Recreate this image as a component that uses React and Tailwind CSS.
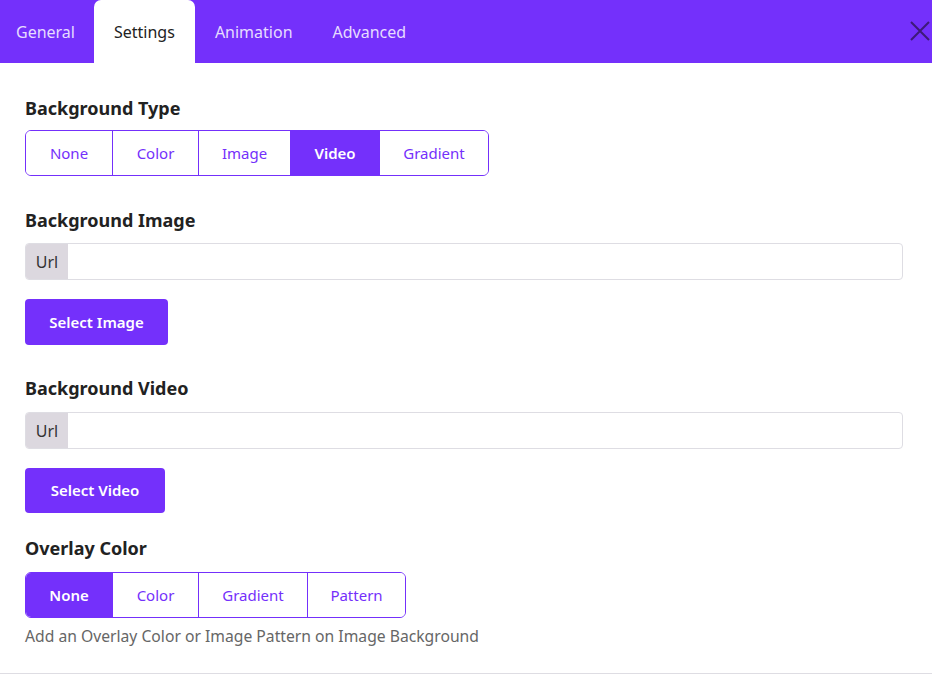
import { useState } from 'react';

const tabs = ['General', 'Settings', 'Animation', 'Advanced'];

const SegmentGroup = ({ options, value, onChange }) => (
  <div className="inline-flex h-[46px] rounded-[6px] border border-[#7430fb] overflow-hidden">
    {options.map((opt, i) => (
      <button
        key={opt.label}
        onClick={() => onChange(opt.label)}
        className={`${opt.w} h-full text-[15px] ${i > 0 ? 'border-l border-[#7430fb]' : ''} ${
          value === opt.label ? 'bg-[#7430fb] text-white font-semibold' : 'bg-white text-[#7430fb]'
        }`}
      >
        {opt.label}
      </button>
    ))}
  </div>
);

const UrlField = () => (
  <div className="flex h-[37px] w-[878px] rounded-[4px] border border-[#dedde3] overflow-hidden">
    <span className="flex items-center justify-center w-[42px] bg-[#dcd8df] text-[16px] text-[#333]">Url</span>
    <input type="text" className="flex-1 px-3 text-[15px] outline-none" />
  </div>
);

const Label = ({ children }) => (
  <h3 className="text-[18px] leading-[24px] font-bold text-[#222]">{children}</h3>
);

export default function App() {
  const [tab, setTab] = useState('Settings');
  const [bgType, setBgType] = useState('Video');
  const [overlay, setOverlay] = useState('None');

  return (
    <div className="w-[932px] h-[689px] bg-white overflow-hidden" style={{ fontFamily: '"Noto Sans", "Open Sans", sans-serif' }}>
      {/* Tabs */}
      <div className="relative flex h-[63px] bg-[#7430fb]">
        {tabs.map((t, i) => (
          <button
            key={t}
            onClick={() => setTab(t)}
            className={`h-full text-[16px] ${i === 0 ? 'pl-4 pr-[19px]' : 'px-5'} ${
              tab === t ? 'bg-white text-[#222] rounded-t-[7px]' : 'text-[#e6dcff]'
            }`}
          >
            {t}
          </button>
        ))}
        <button className="absolute right-[2px] top-[21px] text-[#3d1a78]">
          <svg width="20" height="20" viewBox="0 0 20 20" fill="none" stroke="currentColor" strokeWidth="2">
            <path d="M1 1 L19 19 M19 1 L1 19" />
          </svg>
        </button>
      </div>

      {/* Body */}
      <div className="px-[25px] pt-[33px]">
        <Label>Background Type</Label>
        <div className="mt-[10px]">
          <SegmentGroup
            value={bgType}
            onChange={setBgType}
            options={[
              { label: 'None', w: 'w-[86px]' },
              { label: 'Color', w: 'w-[86px]' },
              { label: 'Image', w: 'w-[92px]' },
              { label: 'Video', w: 'w-[89px]' },
              { label: 'Gradient', w: 'w-[109px]' },
            ]}
          />
        </div>

        <div className="mt-[32px]">
          <Label>Background Image</Label>
        </div>
        <div className="mt-[11px]">
          <UrlField />
        </div>
        <button className="mt-[19px] h-[46px] w-[143px] rounded-[4px] bg-[#7430fb] text-white text-[15px] font-semibold">
          Select Image
        </button>

        <div className="mt-[31px]">
          <Label>Background Video</Label>
        </div>
        <div className="mt-[12px]">
          <UrlField />
        </div>
        <button className="mt-[19px] h-[45px] w-[140px] rounded-[4px] bg-[#7430fb] text-white text-[15px] font-semibold">
          Select Video
        </button>

        <div className="mt-[23px]">
          <Label>Overlay Color</Label>
        </div>
        <div className="mt-[12px]">
          <SegmentGroup
            value={overlay}
            onChange={setOverlay}
            options={[
              { label: 'None', w: 'w-[86px]' },
              { label: 'Color', w: 'w-[86px]' },
              { label: 'Gradient', w: 'w-[109px]' },
              { label: 'Pattern', w: 'w-[98px]' },
            ]}
          />
        </div>
        <p className="mt-[6px] text-[15.7px] leading-[24px] text-[#666]">
          Add an Overlay Color or Image Pattern on Image Background
        </p>
      </div>
      <div className="mt-[25px] border-t border-[#dedde3]" />
    </div>
  );
}
